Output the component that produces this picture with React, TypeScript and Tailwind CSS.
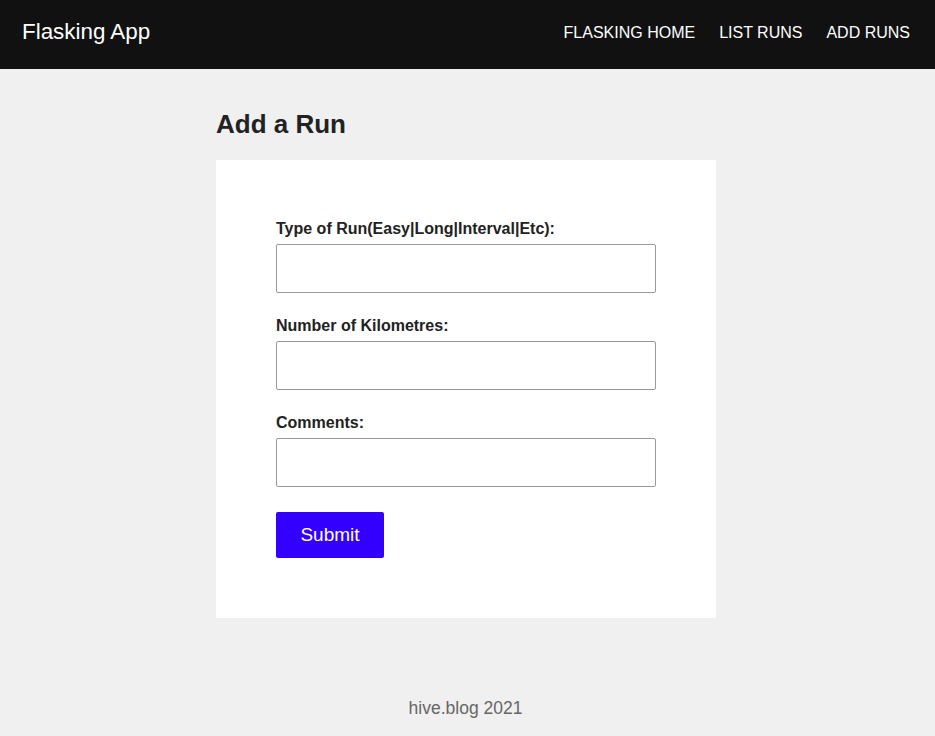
const fields = [
  "Type of Run(Easy|Long|Interval|Etc):",
  "Number of Kilometres:",
  "Comments:",
];

export default function App() {
  return (
    <div className="min-h-screen bg-[#f0f0f0] font-['Liberation_Sans',Arial,sans-serif] text-[#222]">
      <header className="h-[69px] bg-[#111111] flex items-center justify-between pl-[22px] pr-[25px] pb-[6px]">
        <span className="text-white text-[22.4px]">Flasking App</span>
        <nav className="flex items-center gap-6 text-white text-[16px] pt-[2px]">
          <a href="#">FLASKING HOME</a>
          <a href="#">LIST RUNS</a>
          <a href="#">ADD RUNS</a>
        </nav>
      </header>

      <main className="w-[500px] ml-[216px] pt-[39px]">
        <h1 className="text-[26px] font-bold leading-[32px] mb-[20px]">Add a Run</h1>
        <form className="bg-white p-[60px] flex flex-col">
          {fields.map((label, i) => (
            <div key={label} className={i > 0 ? "mt-[24px]" : ""}>
              <label className="block text-[16px] font-bold leading-[18px] mb-[6px]">{label}</label>
              <input
                type="text"
                className="block w-[380px] h-[49px] border border-[#999] rounded-[2px] bg-white px-2"
              />
            </div>
          ))}
          <button
            type="button"
            className="mt-[25px] w-[108px] h-[46px] bg-[#3300ff] text-white text-[19px] rounded-[2px]"
          >
            Submit
          </button>
        </form>
      </main>

      <footer className="text-center text-[#666] text-[17.5px] pt-[77px] pr-[4px]">hive.blog 2021</footer>
    </div>
  );
}
